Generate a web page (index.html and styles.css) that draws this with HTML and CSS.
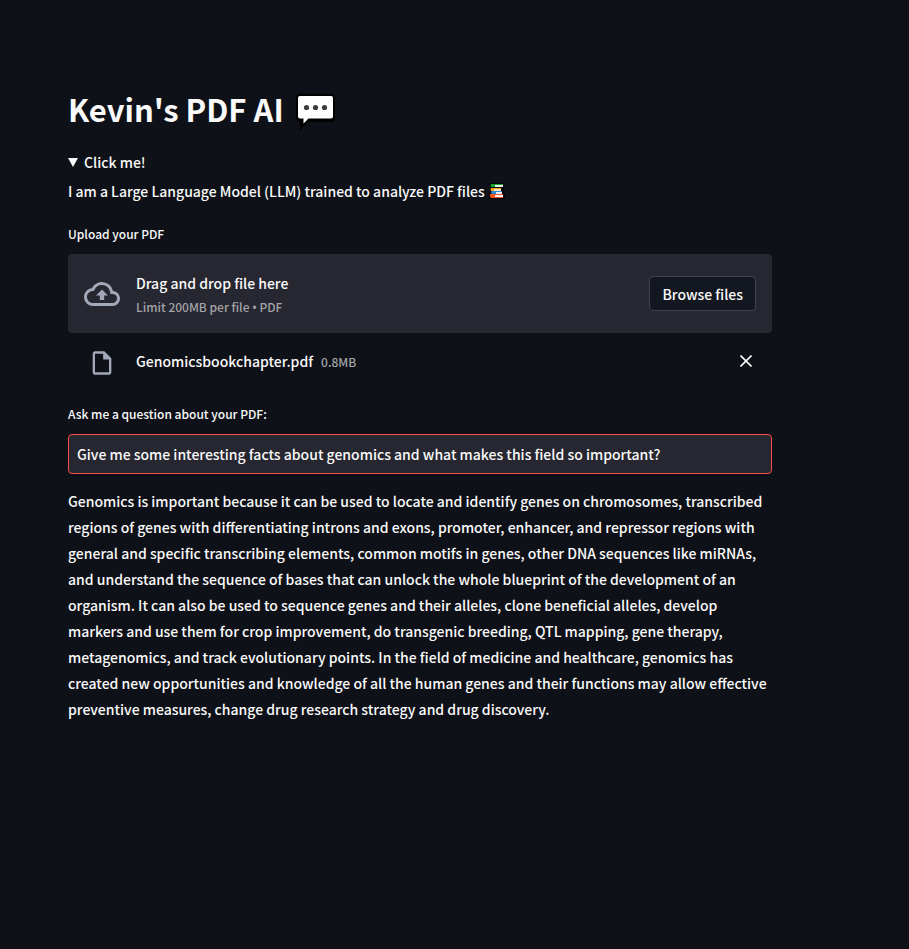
FILE: index.html
```html
<!DOCTYPE html>
<html lang="en">
<head>
<meta charset="utf-8">
<meta name="viewport" content="width=device-width, initial-scale=1">
<title>Kevin's PDF AI</title>
<link rel="stylesheet" href="styles.css">
</head>
<body>
<main class="page">
  <h1 class="title">Kevin's PDF AI
    <svg class="bubble" viewBox="0 0 40 36" aria-hidden="true">
      <path d="M4 1H35Q38 1 38 4V24Q38 27 35 27H12L5 34V27H4Q1 27 1 24V4Q1 1 4 1Z" fill="#000" stroke="#000" stroke-width="2"/>
      <path d="M4 2H35Q37 2 37 4V22.500Q37 24.500 35 24.500H12.500L7.500 29.500V24.500H4Q2 24.500 2 22.500V4Q2 2 4 2Z" fill="#fff"/>
      <g fill="#3c3c3c"><circle cx="10.500" cy="13.500" r="2.600"/><circle cx="19.500" cy="13.500" r="2.600"/><circle cx="28.500" cy="13.500" r="2.600"/></g>
    </svg>
  </h1>

  <details class="about" open>
    <summary class="about-summary"><svg class="marker" viewBox="0 0 10 9" aria-hidden="true"><path d="M0 0H10L5 9Z" fill="currentColor"/></svg>Click me!</summary>
    <p class="about-text">I am a Large Language Model (LLM) trained to analyze PDF files
      <svg class="books" viewBox="0 0 16 16" aria-hidden="true">
        <path d="M1 0H15V10H16V16H0V10L1 9Z" fill="#050505"/>
        <path d="M2 1H14V2H6V4H2Q1 2.500 2 1Z" fill="#16a02c"/><path d="M6 2H14V4H6Z" fill="#eee"/>
        <path d="M2 5H12V6H5V8H2Q1 6.500 2 5Z" fill="#f3a51d"/><path d="M5 6H12V8H5Z" fill="#fbe3b5"/>
        <path d="M3 8H13V9H7V11H3Q1 9.500 3 8Z" fill="#2b8bd8"/><path d="M7 9H13V11H7Z" fill="#e8eef5"/>
        <path d="M1 11H14V12H6V14H14V15H2Q0 13 1 11Z" fill="#f4511e"/><path d="M6 12H14V14H6Z" fill="#f5f5f5"/>
      </svg>
    </p>
  </details>

  <section class="uploader">
    <label class="label" for="browse">Upload your PDF</label>
    <div class="dropzone">
      <svg class="cloud" viewBox="0 0 24 24" aria-hidden="true"><path fill="currentColor" d="M19.350 10.040A7.490 7.490 0 0 0 12 4C9.110 4 6.600 5.640 5.350 8.040A5.994 5.994 0 0 0 0 14c0 3.310 2.690 6 6 6h13c2.760 0 5-2.240 5-5 0-2.640-2.050-4.780-4.650-4.960zM19 18H6c-2.210 0-4-1.790-4-4 0-2.050 1.530-3.760 3.560-3.970l1.070-.11.500-.95A5.469 5.469 0 0 1 12 6c2.620 0 4.880 1.860 5.390 4.430l.300 1.500 1.530.110A2.980 2.980 0 0 1 22 15c0 1.650-1.350 3-3 3zM8 13h2.550v3h2.900v-3H16l-4-4z"/></svg>
      <div class="drop-text">
        <span class="drop-title">Drag and drop file here</span>
        <small class="drop-limit">Limit 200MB per file <span class="dot">•</span> PDF</small>
      </div>
      <button class="browse" id="browse" type="button">Browse files</button>
    </div>
    <div class="file">
      <svg class="file-icon" viewBox="0 0 24 24" aria-hidden="true"><path fill="currentColor" d="M14 2H6c-1.100 0-1.990.900-1.990 2L4 20c0 1.100.890 2 1.990 2H18c1.100 0 2-.900 2-2V8l-6-6zM6 20V4h7v5h5v11H6z"/></svg>
      <div class="file-data">
        <span class="file-name">Genomicsbookchapter.pdf</span>
        <small class="file-size">0.8MB</small>
        <button class="remove" type="button" aria-label="Remove file"><svg class="cross" viewBox="0 0 12 12" aria-hidden="true"><path d="M.500.500L11.500 11.500M11.500.500L.500 11.500" stroke="currentColor" stroke-width="1.600"/></svg></button>
      </div>
    </div>
  </section>

  <label class="label" for="question">Ask me a question about your PDF:</label>
  <input class="question" id="question" type="text" value="Give me some interesting facts about genomics and what makes this field so important?">

  <p class="answer">Genomics is important because it can be used to locate and identify genes on chromosomes, transcribed regions of genes with differentiating introns and exons, promoter, enhancer, and repressor regions with general and specific transcribing elements, common motifs in genes, other DNA sequences like miRNAs, and understand the sequence of bases that can unlock the whole blueprint of the development of an organism. It can also be used to sequence genes and their alleles, clone beneficial alleles, develop markers and use them for crop improvement, do transgenic breeding, QTL mapping, gene therapy, metagenomics, and track evolutionary points. In the field of medicine and healthcare, genomics has created new opportunities and knowledge of all the human genes and their functions may allow effective preventive measures, change drug research strategy and drug discovery.</p>
</main>
</body>
</html>
```

FILE: styles.css
```css
* {
  box-sizing: border-box;
}

body {
  margin: 0;
  padding: 87px 69px 80px 0;
  background: #0e1117;
  color: #fafafa;
  font-family: "Noto Sans CJK SC", "Noto Sans", sans-serif;
  font-size: 14px;
  font-weight: 500;
  line-height: 26px;
}

button,
input {
  font: inherit;
  color: inherit;
}

svg {
  flex: none;
}

.page {
  max-width: 704px;
  margin: 0 auto;
}

.title {
  display: flex;
  align-items: center;
  gap: 12px;
  margin: 0 0 18px;
  font-size: 31px;
  font-weight: 700;
  line-height: 44px;
}

.bubble {
  width: 40px;
  height: 36px;
  margin-top: 6px;
}

.about {
  margin-bottom: 18px;
}

.about-summary {
  display: flex;
  align-items: center;
  gap: 6px;
  list-style: none;
}

.marker {
  width: 10px;
  height: 9px;
}

.about-text {
  display: flex;
  align-items: center;
  gap: 4px;
  margin: 3px 0 0;
}

.books {
  width: 16px;
  height: 16px;
}

.label {
  display: block;
  margin-bottom: 8px;
  font-size: 12px;
  line-height: 24px;
}

.dropzone {
  display: flex;
  align-items: center;
  gap: 16px;
  padding: 16px;
  border-radius: 4px;
  background: #262730;
}

.cloud {
  width: 36px;
  height: 36px;
  color: #a3a8b8;
}

.drop-text {
  display: flex;
  flex: 1;
  flex-direction: column;
}

.drop-limit,
.file-size {
  color: #a3a3a8;
  font-size: 12px;
  line-height: 21px;
}

.dot {
  font-family: "Noto Sans", sans-serif;
  line-height: 1;
}

.browse {
  height: 35px;
  padding: 0 12px;
  border: 1px solid #41444c;
  border-radius: 4px;
  background: #131720;
}

.file {
  display: flex;
  align-items: center;
  gap: 20px;
  margin-bottom: 9px;
  padding: 16px 20px;
}

.file-icon {
  width: 28px;
  height: 28px;
  color: #a3a8b8;
}

.file-data {
  display: flex;
  flex: 1;
  align-items: center;
  gap: 8px;
  padding-bottom: 4px;
  line-height: 24px;
}

.remove {
  display: flex;
  margin-left: auto;
  padding: 0;
  border: 0;
  background: none;
}

.cross {
  width: 12px;
  height: 12px;
}

.question {
  display: block;
  width: 100%;
  height: 40px;
  padding: 0 8px;
  border: 1px solid #ff4b4b;
  border-radius: 4px;
  background: #262730;
}

.answer {
  margin: 14px 0 0;
}
```
